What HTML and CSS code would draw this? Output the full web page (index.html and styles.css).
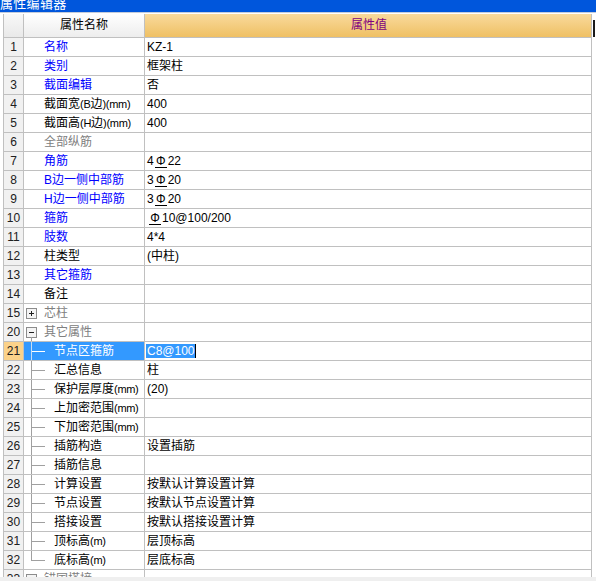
FILE: index.html
```html
<!DOCTYPE html>
<html lang="zh-CN">
<head>
<meta charset="utf-8">
<title>属性编辑器</title>
<link rel="stylesheet" href="styles.css">
</head>
<body>
<div class="window">
  <div class="titlebar"><span class="title-text">属性编辑器</span></div>
  <div class="grid">
    <div class="row head">
      <div class="c num"></div>
      <div class="c name hname">属性名称</div>
      <div class="c val hval">属性值</div>
      <div class="c extra"><div class="edge"></div></div>
    </div>

    <div class="row"><div class="c num">1</div><div class="c name top blue">名称</div><div class="c val">KZ-1</div><div class="c extra"></div></div>
    <div class="row"><div class="c num">2</div><div class="c name top blue">类别</div><div class="c val">框架柱</div><div class="c extra"></div></div>
    <div class="row"><div class="c num">3</div><div class="c name top blue">截面编辑</div><div class="c val">否</div><div class="c extra"></div></div>
    <div class="row"><div class="c num">4</div><div class="c name top">截面宽<span class="unit">(B</span>边<span class="unit">)(mm)</span></div><div class="c val">400</div><div class="c extra"></div></div>
    <div class="row"><div class="c num">5</div><div class="c name top">截面高<span class="unit">(H</span>边<span class="unit">)(mm)</span></div><div class="c val">400</div><div class="c extra"></div></div>
    <div class="row"><div class="c num">6</div><div class="c name top gray">全部纵筋</div><div class="c val"></div><div class="c extra"></div></div>
    <div class="row"><div class="c num">7</div><div class="c name top blue">角筋</div><div class="c val">4<span class="rb">Φ</span>22</div><div class="c extra"></div></div>
    <div class="row"><div class="c num">8</div><div class="c name top blue">B边一侧中部筋</div><div class="c val">3<span class="rb">Φ</span>20</div><div class="c extra"></div></div>
    <div class="row"><div class="c num">9</div><div class="c name top blue">H边一侧中部筋</div><div class="c val">3<span class="rb">Φ</span>20</div><div class="c extra"></div></div>
    <div class="row"><div class="c num">10</div><div class="c name top blue">箍筋</div><div class="c val"><span class="rb lead">Φ</span>10@100/200</div><div class="c extra"></div></div>
    <div class="row"><div class="c num">11</div><div class="c name top blue">肢数</div><div class="c val">4*4</div><div class="c extra"></div></div>
    <div class="row"><div class="c num">12</div><div class="c name top">柱类型</div><div class="c val">(中柱)</div><div class="c extra"></div></div>
    <div class="row"><div class="c num">13</div><div class="c name top blue">其它箍筋</div><div class="c val"></div><div class="c extra"></div></div>
    <div class="row"><div class="c num">14</div><div class="c name top">备注</div><div class="c val"></div><div class="c extra"></div></div>
    <div class="row"><div class="c num">15</div><div class="c name group gray"><svg class="box" width="11" height="11" viewBox="0 0 11 11"><rect x="0.5" y="0.5" width="10" height="10" fill="#f4f4f4" stroke="#8c8c8c"/><path d="M3 5.5h5M5.5 3v5" stroke="#202020"/></svg>芯柱</div><div class="c val"></div><div class="c extra"></div></div>
    <div class="row"><div class="c num">20</div><div class="c name group open gray"><svg class="box" width="11" height="11" viewBox="0 0 11 11"><rect x="0.5" y="0.5" width="10" height="10" fill="#f4f4f4" stroke="#8c8c8c"/><path d="M3 5.5h5" stroke="#202020"/></svg>其它属性</div><div class="c val"></div><div class="c extra"></div></div>
    <div class="row selected"><div class="c num">21</div><div class="c name child">节点区箍筋</div><div class="c val"><span class="sel">C8@100</span></div><div class="c extra"></div></div>
    <div class="row"><div class="c num">22</div><div class="c name child">汇总信息</div><div class="c val">柱</div><div class="c extra"></div></div>
    <div class="row"><div class="c num">23</div><div class="c name child">保护层厚度<span class="unit">(mm)</span></div><div class="c val">(20)</div><div class="c extra"></div></div>
    <div class="row"><div class="c num">24</div><div class="c name child">上加密范围<span class="unit">(mm)</span></div><div class="c val"></div><div class="c extra"></div></div>
    <div class="row"><div class="c num">25</div><div class="c name child">下加密范围<span class="unit">(mm)</span></div><div class="c val"></div><div class="c extra"></div></div>
    <div class="row"><div class="c num">26</div><div class="c name child">插筋构造</div><div class="c val">设置插筋</div><div class="c extra"></div></div>
    <div class="row"><div class="c num">27</div><div class="c name child">插筋信息</div><div class="c val"></div><div class="c extra"></div></div>
    <div class="row"><div class="c num">28</div><div class="c name child">计算设置</div><div class="c val">按默认计算设置计算</div><div class="c extra"></div></div>
    <div class="row"><div class="c num">29</div><div class="c name child">节点设置</div><div class="c val">按默认节点设置计算</div><div class="c extra"></div></div>
    <div class="row"><div class="c num">30</div><div class="c name child">搭接设置</div><div class="c val">按默认搭接设置计算</div><div class="c extra"></div></div>
    <div class="row"><div class="c num">31</div><div class="c name child">顶标高<span class="unit">(m)</span></div><div class="c val">层顶标高</div><div class="c extra"></div></div>
    <div class="row"><div class="c num">32</div><div class="c name child last">底标高<span class="unit">(m)</span></div><div class="c val">层底标高</div><div class="c extra"></div></div>
    <div class="row"><div class="c num">33</div><div class="c name group gray"><svg class="box" width="11" height="11" viewBox="0 0 11 11"><rect x="0.5" y="0.5" width="10" height="10" fill="#f4f4f4" stroke="#8c8c8c"/><path d="M3 5.5h5M5.5 3v5" stroke="#202020"/></svg>锚固搭接</div><div class="c val"></div><div class="c extra"></div></div>
  </div>
  <div class="hscroll"></div>
</div>
</body>
</html>
```

FILE: styles.css
```css
* { box-sizing: border-box; }

html, body {
  margin: 0;
  padding: 0;
  background: #ffffff;
}

body {
  width: 596px;
  height: 581px;
  overflow: hidden;
  font-family: "Liberation Sans", "Noto Sans CJK SC", sans-serif;
  font-size: 12px;
  color: #000000;
}

.window {
  width: 596px;
  height: 581px;
  display: flex;
  flex-direction: column;
}

.titlebar {
  height: 13px;
  flex: none;
  background: #0056dc;
  border-bottom: 1px solid #c4ccda;
  overflow: hidden;
  margin-bottom: 1px;
}

.title-text {
  display: block;
  margin-top: -4px;
  line-height: 16px;
  font-size: 13px;
  color: #ffffff;
  letter-spacing: 0.3px;
}

.grid {
  height: 563px;
  flex: none;
  overflow: hidden;
  margin-left: 3px;
  border-left: 1px solid #c0c0c0;
}

.row {
  display: grid;
  grid-template-columns: 20px 121px 447px 5px;
  height: 19px;
}

.row.head {
  height: 24px;
}

.c {
  height: 100%;
  line-height: 18px;
  white-space: nowrap;
  overflow: hidden;
}

.num, .name, .val {
  border-right: 1px solid #c0c0c0;
  border-bottom: 1px solid #c0c0c0;
}

.num {
  background: #f1f1f1;
  text-align: center;
  color: #202020;
}

.head .num {
  background: linear-gradient(#f8f8f8, #e9e9e9);
}

.head .c {
  line-height: 23px;
}

.hname {
  background: linear-gradient(#ffffff, #ededed);
  text-align: center;
  color: #000000;
}

.hval {
  background: linear-gradient(#f9da9c, #efc064);
  text-align: center;
  color: #800080;
}

.extra {
  background: #ffffff;
}

.edge {
  width: 2px;
  height: 17px;
  margin-top: 6px;
  margin-left: 1px;
  background: #1a1a1a;
}

.unit {
  font-size: 11px;
  letter-spacing: -0.3px;
}

.name.top {
  padding-left: 20px;
}

.name.group {
  padding-left: 2px;
  display: flex;
  align-items: center;
  position: relative;
}

.box {
  flex: none;
  margin-right: 7px;
}

.name.child {
  padding-left: 30px;
  position: relative;
}

.name.child::before {
  content: "";
  position: absolute;
  left: 7px;
  top: 0;
  bottom: -1px;
  width: 1px;
  background: #a0a0a0;
}

.name.child.last::before {
  bottom: auto;
  height: 10px;
}

.name.child::after {
  content: "";
  position: absolute;
  left: 8px;
  top: 9px;
  width: 13px;
  height: 1px;
  background: #a0a0a0;
}

.name.open::after {
  content: "";
  position: absolute;
  left: 7px;
  top: 14px;
  bottom: -1px;
  width: 1px;
  background: #a0a0a0;
}

.blue { color: #0000ff; }
.gray { color: #808080; }

.val {
  padding-left: 2px;
}

.rb {
  display: inline-block;
  width: 12px;
  text-align: center;
  margin: 0 1px;
  line-height: 12px;
  border-bottom: 1px solid #000;
}

.rb.lead {
  margin-left: 2px;
}

.selected .num {
  background: #fbd28a;
}

.selected .name {
  background: #3399ff;
  color: #ffffff;
}

.selected .name.child::before {
  background: #c6ddf5;
}

.selected .name.child::after {
  background: #ffffff;
}

.sel {
  background: #3399ff;
  color: #ffffff;
  margin-left: -1px;
  padding-left: 1px;
  border-right: 1px solid #000000;
}

.hscroll {
  flex: 1;
  background: #efefef;
}
```
